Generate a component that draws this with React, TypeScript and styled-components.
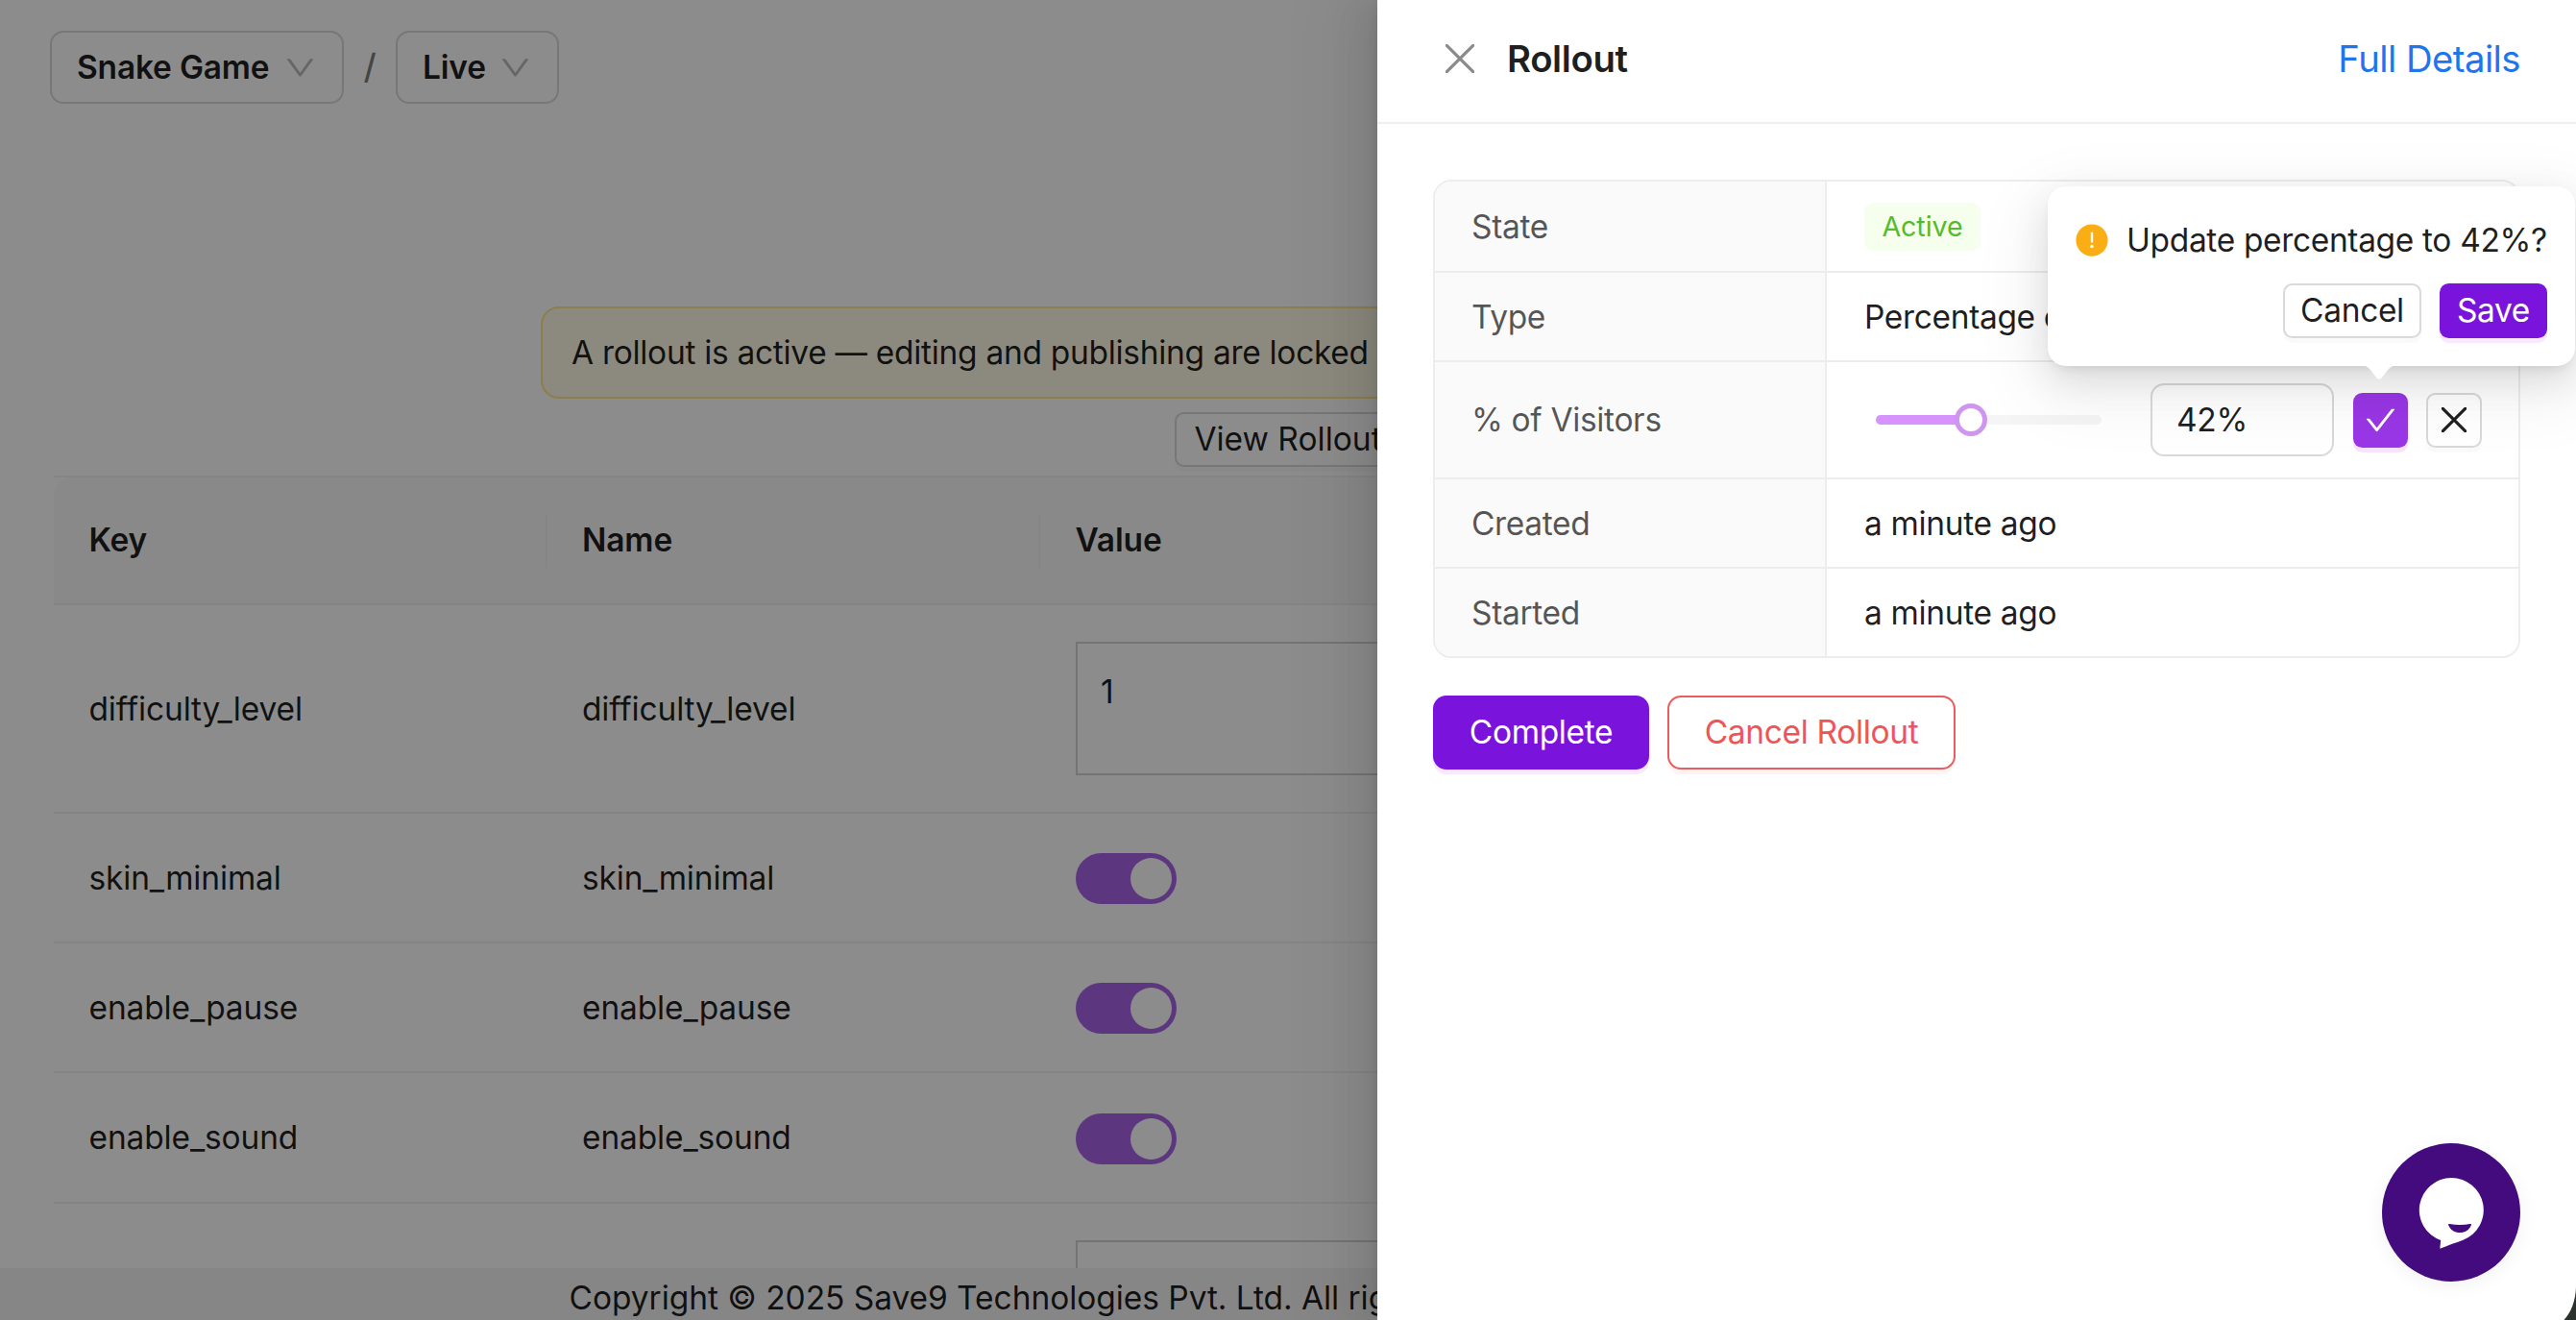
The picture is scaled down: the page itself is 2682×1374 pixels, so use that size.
import React from "react";
import styled, { createGlobalStyle, css } from "styled-components";
import { AiFillExclamationCircle, AiOutlineCheck, AiOutlineDown } from "react-icons/ai";

const ink = "rgba(0, 0, 0, 0.88)";
const primary = "#7a14dc";
const line = "#ededed";

const GlobalStyle = createGlobalStyle`
  * { box-sizing: border-box; }
  body {
    margin: 0;
    background: #fff;
    overflow: hidden;
    font-family: Inter, "Liberation Sans", sans-serif;
    font-size: 33.5px;
    line-height: 1.2;
    letter-spacing: -0.35px;
    color: ${ink};
  }
  button { font: inherit; letter-spacing: inherit; color: inherit; margin: 0; }
`;

const Screen = styled.div`
  position: relative;
  width: 2682px;
  height: 1374px;
  overflow: hidden;
  background: #fff;
`;

/* ---------- page ---------- */

const Page = styled.div`
  height: 1374px;
  display: flex;
  flex-direction: column;
`;

const Breadcrumb = styled.header`
  display: flex;
  align-items: center;
  padding: 32px 52px 0;
`;

const SelectBox = styled.div<{ $w: number }>`
  display: flex;
  align-items: center;
  justify-content: space-between;
  width: ${(p) => p.$w}px;
  height: 76px;
  padding: 0 25px 0 26px;
  border: 2px solid #d9d9d9;
  border-radius: 14px;
  font-weight: 600;
  letter-spacing: -0.2px;
  white-space: nowrap;
  svg {
    width: 37px;
    height: 37px;
    flex: none;
    color: rgba(0, 0, 0, 0.27);
  }
`;

const Slash = styled.span`
  width: 54px;
  text-align: center;
  font-size: 36px;
  font-weight: 500;
  color: rgba(0, 0, 0, 0.5);
`;

const Content = styled.main`
  flex: 1;
  min-height: 0;
  overflow: hidden;
  display: flex;
  flex-direction: column;
  align-items: center;
  padding: 211px 56px 0;
  letter-spacing: 0;
`;

const Alert = styled.div`
  display: flex;
  align-items: center;
  width: 1556px;
  height: 96px;
  flex: none;
  padding: 0 30px;
  border: 2.4px solid #ffe58f;
  border-radius: 19px;
  background: #fffbe6;
  letter-spacing: -0.3px;
  white-space: nowrap;
  overflow: hidden;
`;

const Table = styled.section`
  align-self: stretch;
  flex: none;
  margin-top: 9px;
  border-top: 2px solid #f3f3f3;
  letter-spacing: -0.15px;
`;

const HeadRow = styled.div`
  display: grid;
  grid-template-columns: 513.5px 513.5px 1fr;
  height: 133px;
  align-items: center;
  background: #fafafa;
  border-bottom: 2px solid #f0f0f0;
  border-top-left-radius: 19px;
  font-weight: 600;
`;

const HeadCell = styled.div<{ $rule?: boolean }>`
  height: 56px;
  display: flex;
  align-items: center;
  margin-left: -2px;
  padding-left: 38.5px;
  border-right: ${(p) => (p.$rule ? "2px solid #f3f3f3" : "0")};
`;

const Row = styled.div<{ $h: number }>`
  display: grid;
  grid-template-columns: 513.5px 513.5px 1fr;
  align-items: center;
  height: ${(p) => p.$h}px;
  border-bottom: 2px solid #f0f0f0;
`;

const Cell = styled.div`
  padding: 1px 0 0 36.5px;
`;

const ValueCell = styled.div`
  padding: 0 37px;
`;

const TextArea = styled.div`
  height: 139px;
  padding: 30px 24px;
  border: 2px solid #d4d4d4;
`;

const Toggle = styled.div`
  display: flex;
  justify-content: flex-end;
  width: 105px;
  height: 53px;
  margin-top: 2px;
  padding: 5px;
  border-radius: 27px;
  background: ${primary};
  opacity: 0.65;
  &::after {
    content: "";
    width: 43px;
    height: 43px;
    border-radius: 50%;
    background: #fff;
  }
`;

const Footer = styled.footer`
  flex: none;
  height: 54px;
  padding: 11px 0 0 592.5px;
  background: #f4f4f4;
  letter-spacing: -0.05px;
  white-space: nowrap;
`;

const Mask = styled.div`
  position: absolute;
  inset: 0;
  background: rgba(0, 0, 0, 0.45);
`;

/* ---------- buttons ---------- */

type Tone = "default" | "primary" | "hover" | "danger";

const tones = {
  default: css`
    background: transparent;
    border: 2.4px solid #d9d9d9;
    box-shadow: 0 5px 0 rgba(0, 0, 0, 0.02);
  `,
  primary: css`
    background: ${primary};
    border: 0;
    color: #fff;
    box-shadow: 0 5px 0 rgba(200, 30, 255, 0.1);
  `,
  hover: css`
    background: #9a36e6;
    border: 0;
    color: #fff;
    box-shadow: 0 5px 0 rgba(200, 30, 255, 0.12);
  `,
  danger: css`
    background: #fff;
    border: 2.4px solid #e95c5f;
    color: #ee5557;
    box-shadow: 0 5px 0 rgba(255, 38, 5, 0.05);
  `,
};

const Button = styled.button<{ $w: number; $tone?: Tone; $small?: boolean }>`
  display: flex;
  flex: none;
  align-items: center;
  justify-content: center;
  width: ${(p) => p.$w}px;
  height: ${(p) => (p.$small ? 57 : 77)}px;
  padding: 0;
  border-radius: ${(p) => (p.$small ? 9.5 : 14)}px;
  white-space: nowrap;
  ${(p) => tones[p.$tone ?? "default"]}
`;

/* ---------- drawer ---------- */

const Drawer = styled.aside`
  position: absolute;
  top: 0;
  right: 0;
  width: 1248px;
  height: 1374px;
  background: #fff;
  box-shadow:
    -14px 0 38px 0 rgba(0, 0, 0, 0.08),
    -7px 0 14px -10px rgba(0, 0, 0, 0.12),
    -22px 0 67px 19px rgba(0, 0, 0, 0.05);
`;

const DrawerHeader = styled.header`
  display: flex;
  align-items: center;
  height: 129px;
  padding: 0 58px 5px 71px;
  border-bottom: 2.4px solid #efefef;
  font-size: 38.3px;
  svg {
    width: 30px;
    height: 30px;
    color: #8a8a8a;
  }
`;

const DrawerTitle = styled.h1`
  flex: 1;
  margin: 1px 0 0 34px;
  font-size: inherit;
  font-weight: 600;
`;

const DrawerLink = styled.a`
  margin-top: 1px;
  letter-spacing: -0.55px;
  color: #1f75ec;
`;

const DrawerBody = styled.div`
  padding: 58px 58px 0;
`;

const Details = styled.dl`
  margin: 0;
  border: 2px solid ${line};
  border-radius: 19px;
  overflow: hidden;
`;

const Detail = styled.div<{ $h: number }>`
  display: grid;
  grid-template-columns: 408px 1fr;
  height: ${(p) => p.$h}px;
  &:not(:last-child) {
    border-bottom: 2px solid ${line};
  }
`;

const Term = styled.dt`
  display: flex;
  align-items: center;
  padding: 1px 0 0 38px;
  background: #fafafa;
  border-right: 2px solid ${line};
  color: rgba(0, 0, 0, 0.67);
`;

const Value = styled.dd<{ $controls?: boolean }>`
  display: flex;
  align-items: center;
  margin: 0;
  padding: ${(p) => (p.$controls ? 0 : 1)}px 36px 0 39px;
  white-space: nowrap;
`;

const Tag = styled.span`
  display: flex;
  align-items: center;
  justify-content: center;
  width: 121px;
  height: 50px;
  border-radius: 9px;
  background: #f6ffed;
  color: #55bb2b;
  font-size: 28.7px;
  letter-spacing: -0.1px;
`;

const Rail = styled.div`
  position: relative;
  width: 235px;
  height: 10px;
  margin: 0 51px 0 12px;
  border-radius: 5px;
  background: rgba(0, 0, 0, 0.04);
`;

const Track = styled.div`
  height: 10px;
  border-radius: 5px 0 0 5px;
  background: #d693fd;
`;

const Knob = styled.div`
  position: absolute;
  top: -12px;
  width: 34px;
  height: 34px;
  margin-left: -17px;
  border: 5px solid #cf96ef;
  border-radius: 50%;
  background: #fff;
`;

const NumberField = styled.div`
  width: 191px;
  height: 76px;
  display: flex;
  align-items: center;
  padding-left: 25px;
  margin-right: 20px;
  border: 2.4px solid #d9d9d9;
  border-radius: 14px;
`;

const Actions = styled.div<{ $top?: number; $end?: boolean }>`
  display: flex;
  gap: 19px;
  margin-top: ${(p) => p.$top ?? 0}px;
  justify-content: ${(p) => (p.$end ? "flex-end" : "flex-start")};
`;

/* ---------- confirm popover ---------- */

const Popover = styled.div`
  position: absolute;
  top: 194px;
  left: 2132px;
  width: 549px;
  height: 187px;
  padding: 34px 29px 0 27px;
  border-radius: 19px;
  background: #fff;
  box-shadow:
    0 14px 38px 0 rgba(0, 0, 0, 0.1),
    0 7px 14px -8px rgba(0, 0, 0, 0.15),
    0 22px 67px 19px rgba(0, 0, 0, 0.055);
`;

const PopoverTitle = styled.div`
  display: flex;
  align-items: center;
  height: 44px;
  white-space: nowrap;
  svg {
    flex: none;
    width: 38px;
    height: 38px;
    margin-right: 17px;
    color: #faad14;
  }
`;

const Arrow = styled.svg`
  position: absolute;
  top: 186px;
  left: 326px;
  width: 38px;
  height: 17px;
`;

/* ---------- chat launcher ---------- */

const ChatButton = styled.div`
  position: absolute;
  left: 2480px;
  top: 1190px;
  width: 144px;
  height: 144px;
  border-radius: 50%;
  background: #430b7e;
  box-shadow: 0 4px 20px rgba(0, 0, 0, 0.06);
`;

const WindowCorner = styled.svg`
  position: absolute;
  right: 0;
  bottom: 0;
  width: 14px;
  height: 36px;
`;

const CloseIcon = ({ size, stroke }: { size: number; stroke: number }) => (
  <svg width={size} height={size} viewBox="0 0 30 30" fill="none" stroke="currentColor" strokeWidth={stroke}>
    <path d="M1.3 1.3 28.7 28.7M28.7 1.3 1.3 28.7" strokeLinecap="round" />
  </svg>
);

const flags = [
  { key: "skin_minimal", h: 135 },
  { key: "enable_pause", h: 135 },
  { key: "enable_sound", h: 136 },
];

const percent = 42;

export default function App() {
  return (
    <Screen>
      <GlobalStyle />
      <Page>
        <Breadcrumb>
          <SelectBox $w={306}>
            Snake Game <AiOutlineDown />
          </SelectBox>
          <Slash>/</Slash>
          <SelectBox $w={170}>
            Live <AiOutlineDown />
          </SelectBox>
        </Breadcrumb>
        <Content>
          <Alert>
            A rollout is active — editing and publishing are locked until it is completed or cancelled.
          </Alert>
          <Actions $top={14}>
            <Button $w={236} $small>
              View Rollout
            </Button>
          </Actions>
          <Table>
            <HeadRow>
              <HeadCell $rule>Key</HeadCell>
              <HeadCell $rule>Name</HeadCell>
              <HeadCell>Value</HeadCell>
            </HeadRow>
            <Row $h={217}>
              <Cell>difficulty_level</Cell>
              <Cell>difficulty_level</Cell>
              <ValueCell>
                <TextArea>1</TextArea>
              </ValueCell>
            </Row>
            {flags.map((f) => (
              <Row key={f.key} $h={f.h}>
                <Cell>{f.key}</Cell>
                <Cell>{f.key}</Cell>
                <ValueCell>
                  <Toggle />
                </ValueCell>
              </Row>
            ))}
            <Row $h={217}>
              <Cell />
              <Cell />
              <ValueCell>
                <TextArea />
              </ValueCell>
            </Row>
          </Table>
        </Content>
        <Footer>Copyright © 2025 Save9 Technologies Pvt. Ltd. All rights reserved.</Footer>
      </Page>

      <Mask />

      <Drawer>
        <DrawerHeader>
          <CloseIcon size={30} stroke={3.2} />
          <DrawerTitle>Rollout</DrawerTitle>
          <DrawerLink>Full Details</DrawerLink>
        </DrawerHeader>
        <DrawerBody>
          <Details>
            <Detail $h={95}>
              <Term>State</Term>
              <Value>
                <Tag>Active</Tag>
              </Value>
            </Detail>
            <Detail $h={93}>
              <Term>Type</Term>
              <Value>Percentage of visitors</Value>
            </Detail>
            <Detail $h={122}>
              <Term>% of Visitors</Term>
              <Value $controls>
                <Rail>
                  <Track style={{ width: `${percent}%` }} />
                  <Knob style={{ left: `${percent}%` }} />
                </Rail>
                <NumberField>{percent}%</NumberField>
                <Actions>
                  <Button $w={57} $small $tone="hover">
                    <AiOutlineCheck size={37} />
                  </Button>
                  <Button $w={58} $small>
                    <CloseIcon size={26} stroke={3.6} />
                  </Button>
                </Actions>
              </Value>
            </Detail>
            <Detail $h={93}>
              <Term>Created</Term>
              <Value>a minute ago</Value>
            </Detail>
            <Detail $h={91}>
              <Term>Started</Term>
              <Value>a minute ago</Value>
            </Detail>
          </Details>
          <Actions $top={39}>
            <Button $w={225} $tone="primary">
              Complete
            </Button>
            <Button $w={300} $tone="danger">
              Cancel Rollout
            </Button>
          </Actions>
        </DrawerBody>
      </Drawer>

      <Popover>
        <PopoverTitle>
          <AiFillExclamationCircle />
          Update percentage to {percent}%?
        </PopoverTitle>
        <Actions $top={23} $end>
          <Button $w={144} $small>
            Cancel
          </Button>
          <Button $w={112} $small $tone="primary">
            Save
          </Button>
        </Actions>
        <Arrow viewBox="0 0 38 17">
          <path d="M0 0h38c-4 0-7 2-9 4l-7.500 9.500c-1.200 1.500-3.800 1.500-5 0L9 4C7 2 4 0 0 0z" fill="#fff" />
        </Arrow>
      </Popover>

      <ChatButton>
        <svg width="144" height="144" viewBox="0 0 144 144">
          <path
            d="M72.300 36a33.500 33.500 0 0 1 12.200 64.700C77 103.500 68 106.500 60.300 109.700L61.200 101.100A33.500 33.500 0 0 1 72.300 36z"
            fill="#fff"
          />
          <path
            d="M69.200 85.200c-.4-1 .3-1.300 1.200-1.100 7 1.200 14.500 1.200 21.300 0 1-.2 1.500.200 1.200 1.100-2 5-6.300 7.800-11.800 7.800s-9.900-2.800-11.900-7.800z"
            fill="#430b7e"
          />
        </svg>
      </ChatButton>

      <WindowCorner viewBox="0 0 14 36">
        <path d="M14 2C13.500 16 9 28 1.500 36H14z" fill="#2b312c" />
      </WindowCorner>
    </Screen>
  );
}
